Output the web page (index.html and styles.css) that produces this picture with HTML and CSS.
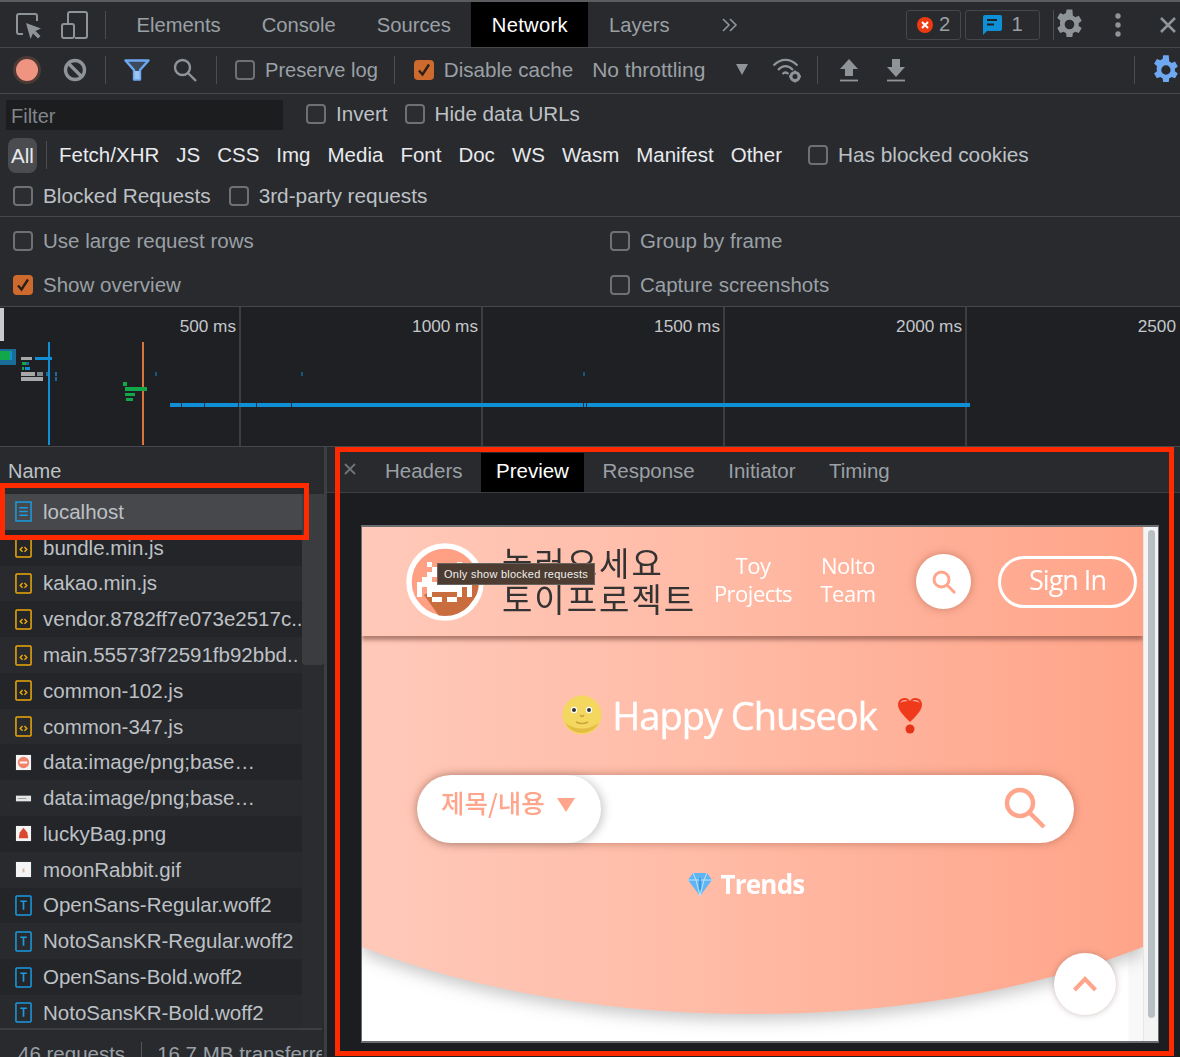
FILE: index.html
```html
<!DOCTYPE html>
<html lang="en">
<head>
    <meta charset="UTF-8">
    <meta name="viewport" content="width=device-width, initial-scale=1.0">
    <title>DevTools Network Preview</title>
    <link rel="stylesheet" href="styles.css">
</head>
<body>
    <!-- Shared file type icons -->
    <svg class="defs" width="0" height="0">
        <symbol id="ico-doc" viewBox="0 0 18 22">
            <rect x="1" y="1" width="16" height="20" fill="none" stroke="#1a9be0" stroke-width="1.6"/>
            <path d="M4.500 7h9M4.500 11h9M4.500 15h9" stroke="#1a9be0" stroke-width="1.4"/>
        </symbol>
        <symbol id="ico-js" viewBox="0 0 18 22">
            <rect x="1" y="1" width="16" height="20" rx="1" fill="none" stroke="#eba80c" stroke-width="1.6"/>
            <path d="M8 10.500l-2.500 2.500 2.500 2.500M10 10.500l2.500 2.500-2.500 2.500" fill="none" stroke="#eba80c" stroke-width="1.500"/>
        </symbol>
        <symbol id="ico-font" viewBox="0 0 18 22">
            <rect x="1" y="1" width="16" height="20" rx="1" fill="none" stroke="#1a9be0" stroke-width="1.6"/>
            <path d="M5.500 6.500h7M9 6.500v9" fill="none" stroke="#1a9be0" stroke-width="1.800"/>
        </symbol>
    </svg>

    <!-- Main tabs -->
    <div class="tabbar">
        <div class="icon-cell cell-inspect">
            <svg width="28" height="28" viewBox="0 0 28 28"><path d="M9 23H5a2 2 0 0 1-2-2V5a2 2 0 0 1 2-2h16a2 2 0 0 1 2 2v5" fill="none" stroke="#8f9499" stroke-width="2"/><path d="M12 12l15 5.500-5.500 2.500 5 5-2.500 2.500-5-5-2.500 5.500z" fill="#8f9499"/></svg>
        </div>
        <div class="icon-cell cell-device">
            <svg width="28" height="28" viewBox="0 0 28 28"><path d="M8 12V3a2 2 0 0 1 2-2h15a2 2 0 0 1 2 2v22a2 2 0 0 1-2 2H15" fill="none" stroke="#8f9499" stroke-width="2"/><rect x="2" y="13" width="12" height="14" rx="2" fill="none" stroke="#8f9499" stroke-width="2"/></svg>
        </div>
        <span class="sep sep-tab"></span>
        <div class="tab">Elements</div>
        <div class="tab">Console</div>
        <div class="tab">Sources</div>
        <div class="tab active">Network</div>
        <div class="tab">Layers</div>
        <div class="more">
            <svg width="18" height="16" viewBox="0 0 18 16"><path d="M2 2l6 6-6 6M9 2l6 6-6 6" fill="none" stroke="#8f9499" stroke-width="1.600"/></svg>
        </div>
        <div class="tabbar-right">
            <div class="badge badge-err">
                <svg width="16" height="16" viewBox="0 0 16 16"><circle cx="8" cy="8" r="8" fill="#ee3a12"/><path d="M5 5l6 6M11 5l-6 6" stroke="#fff" stroke-width="2"/></svg>
                <span>2</span>
            </div>
            <div class="badge badge-msg">
                <svg width="20" height="20" viewBox="0 0 20 20"><path d="M3 0h15a2 2 0 0 1 2 2v12a2 2 0 0 1-2 2H5l-4 4V2a2 2 0 0 1 2-2z" fill="#0f8fd6"/><path d="M5 5h10M5 9.500h7" stroke="#1f2023" stroke-width="2"/></svg>
                <span>1</span>
            </div>
            <span class="sep sep-right"></span>
            <svg class="gear-top" width="33" height="33" viewBox="0 0 24 24"><path fill="#8f9499" d="M19.400 13a7.600 7.600 0 0 0 0-2l2.200-1.700-2.100-3.600-2.600 1a7.500 7.500 0 0 0-1.700-1L14.800 1h-4.200l-.4 2.700a7.500 7.500 0 0 0-1.700 1l-2.600-1-2.100 3.600L6 9a7.600 7.600 0 0 0 0 3.900l-2.200 1.700 2.100 3.600 2.600-1c.5.400 1.100.700 1.700 1l.4 2.800h4.200l.4-2.800c.6-.3 1.200-.6 1.700-1l2.600 1 2.100-3.600zM12.700 15.500a3.500 3.500 0 1 1 0-7 3.500 3.500 0 0 1 0 7z"/></svg>
            <svg class="dots" width="6" height="24" viewBox="0 0 6 24"><circle cx="3" cy="3" r="2.700" fill="#8f9499"/><circle cx="3" cy="12" r="2.700" fill="#8f9499"/><circle cx="3" cy="21" r="2.700" fill="#8f9499"/></svg>
            <svg class="close-top" width="18" height="18" viewBox="0 0 18 18"><path d="M2 2l14 14M16 2L2 16" stroke="#8f9499" stroke-width="2.600"/></svg>
        </div>
    </div>

    <!-- Network toolbar -->
    <div class="toolbar">
        <span class="record"></span>
        <svg class="tool-stop" width="24" height="24" viewBox="0 0 24 24"><circle cx="12" cy="12" r="9.500" fill="none" stroke="#8f9499" stroke-width="3.400"/><path d="M5.500 5.500l13 13" stroke="#8f9499" stroke-width="3.400"/></svg>
        <span class="sep sep-a"></span>
        <svg class="tool-filter" width="26" height="22" viewBox="0 0 26 22"><path d="M1.500 1.500h23L16 11v9.500h-6V11z" fill="#3d4a5c" stroke="#6ea8f0" stroke-width="2.400" stroke-linejoin="round"/><path d="M10.500 12h5v8h-5z" fill="#9cc4f5"/></svg>
        <svg class="tool-search" width="24" height="24" viewBox="0 0 24 24"><circle cx="9.500" cy="9.500" r="7.500" fill="none" stroke="#8f9499" stroke-width="2.400"/><path d="M15 15l8 8" stroke="#8f9499" stroke-width="2.400"/></svg>
        <span class="sep sep-b"></span>
        <label class="check check-preserve"><span class="box"></span>Preserve log</label>
        <span class="sep sep-c"></span>
        <label class="check check-cache">
            <span class="box box-on"><svg width="20" height="20" viewBox="0 0 20 20"><path d="M5 10.500l3.500 4L15 4.500" fill="none" stroke="#2a2018" stroke-width="2.400"/></svg></span>Disable cache
        </label>
        <span class="throttle">No throttling</span>
        <span class="caret"></span>
        <svg class="tool-wifi" width="30" height="26" viewBox="0 0 30 26"><path d="M1.500 8.500C9 1 18 1 25.500 8.500M6 13c5-5 10-5 15 0M10.500 17c2-2 4-2 6 0" fill="none" stroke="#8f9499" stroke-width="2.200"/><circle cx="23" cy="19.500" r="4" fill="none" stroke="#8f9499" stroke-width="3"/><path d="M23 13.500v2M23 23.500v2M17 19.500h2M27 19.500h2" stroke="#8f9499" stroke-width="2"/></svg>
        <span class="sep sep-d"></span>
        <svg class="tool-up" width="20" height="24" viewBox="0 0 20 24"><path d="M10 1l9 10h-5v7H6v-7H1z" fill="#8f9499"/><path d="M1 22.500h18" stroke="#8f9499" stroke-width="1.800"/></svg>
        <svg class="tool-down" width="20" height="24" viewBox="0 0 20 24"><path d="M10 19l9-10h-5V1H6v8H1z" fill="#8f9499"/><path d="M1 22.500h18" stroke="#8f9499" stroke-width="1.800"/></svg>
        <span class="sep sep-e"></span>
        <svg class="tool-gear" width="32" height="32" viewBox="0 0 24 24"><path fill="#6ea8f0" d="M19.400 13a7.600 7.600 0 0 0 0-2l2.200-1.700-2.100-3.600-2.600 1a7.500 7.500 0 0 0-1.700-1L14.800 1h-4.200l-.4 2.700a7.500 7.500 0 0 0-1.700 1l-2.600-1-2.100 3.600L6 9a7.600 7.600 0 0 0 0 3.900l-2.200 1.700 2.100 3.600 2.600-1c.5.400 1.100.700 1.700 1l.4 2.800h4.200l.4-2.800c.6-.3 1.200-.6 1.700-1l2.600 1 2.100-3.600zM12.700 15.500a3.500 3.500 0 1 1 0-7 3.500 3.500 0 0 1 0 7z"/></svg>
    </div>

    <!-- Filter rows -->
    <div class="filters">
        <div class="filter-row">
            <div class="filter-input">Filter</div>
            <label class="check check-invert"><span class="box"></span>Invert</label>
            <label class="check check-hide"><span class="box"></span>Hide data URLs</label>
        </div>
        <div class="type-row">
            <span class="type type-all">All</span>
            <span class="sep sep-all"></span>
            <span class="type">Fetch/XHR</span>
            <span class="type">JS</span>
            <span class="type">CSS</span>
            <span class="type">Img</span>
            <span class="type">Media</span>
            <span class="type">Font</span>
            <span class="type">Doc</span>
            <span class="type">WS</span>
            <span class="type">Wasm</span>
            <span class="type">Manifest</span>
            <span class="type">Other</span>
            <label class="check check-cookies"><span class="box"></span>Has blocked cookies</label>
        </div>
        <div class="blocked-row">
            <label class="check"><span class="box"></span>Blocked Requests</label>
            <label class="check"><span class="box"></span>3rd-party requests</label>
        </div>
    </div>

    <!-- Settings -->
    <div class="settings">
        <label class="check"><span class="box"></span>Use large request rows</label>
        <label class="check"><span class="box"></span>Group by frame</label>
        <label class="check">
            <span class="box box-on"><svg width="20" height="20" viewBox="0 0 20 20"><path d="M5 10.500l3.500 4L15 4.500" fill="none" stroke="#2a2018" stroke-width="2.400"/></svg></span>Show overview
        </label>
        <label class="check"><span class="box"></span>Capture screenshots</label>
    </div>

    <!-- Timeline overview -->
    <div class="overview">
        <div class="tick">500 ms</div>
        <div class="tick">1000 ms</div>
        <div class="tick">1500 ms</div>
        <div class="tick">2000 ms</div>
        <div class="tick tick-last">2500</div>
        <svg class="waterfall" width="1180" height="139" viewBox="0 307 1180 139">
            <rect x="0" y="308" width="4" height="33" fill="#c9cacc"/>
            <rect x="0" y="349" width="16" height="16" fill="#1a6d99"/>
            <rect x="0" y="351" width="10" height="9" fill="#12a84a"/>
            <rect x="10" y="351" width="2" height="9" fill="#0f8fd6"/>
            <rect x="21" y="357" width="11" height="3" fill="#a8a8a8"/>
            <rect x="35" y="357" width="17" height="3" fill="#0f8fd6"/>
            <rect x="22" y="362" width="4" height="3" fill="#12a84a"/>
            <rect x="26" y="362" width="3" height="3" fill="#1a6d99"/>
            <rect x="22" y="367" width="2" height="3" fill="#12a84a"/>
            <rect x="25" y="367" width="5" height="3" fill="#0f8fd6"/>
            <rect x="21" y="372" width="14" height="4" fill="#a8a8a8"/>
            <rect x="37" y="372" width="6" height="4" fill="#7f8a90"/>
            <rect x="46" y="372" width="4" height="4" fill="#1a6d99"/>
            <rect x="55" y="372" width="2" height="4" fill="#1a6d99"/>
            <rect x="21" y="377" width="22" height="4" fill="#a8a8a8"/>
            <rect x="55" y="377" width="2" height="4" fill="#1a6d99"/>
            <rect x="48" y="342" width="2" height="103" fill="#0f8fd6"/>
            <rect x="142" y="342" width="2" height="103" fill="#d9743a"/>
            <rect x="123" y="382" width="4" height="4" fill="#12a84a"/>
            <rect x="125" y="387" width="22" height="4" fill="#12a84a"/>
            <rect x="125" y="393" width="10" height="3" fill="#12a84a"/>
            <rect x="126" y="398" width="7" height="3" fill="#12a84a"/>
            <rect x="155" y="372" width="2" height="4" fill="#16567a"/>
            <rect x="301" y="372" width="2" height="4" fill="#16567a"/>
            <rect x="583" y="372" width="2" height="4" fill="#16567a"/>
            <rect x="170" y="403" width="800" height="4" fill="#0f8fd6"/>
            <path d="M181.500 403v4M204.500 403v4M238.500 403v4M256.500 403v4M291.500 403v4M583.500 403v4M586.500 403v4" stroke="#23303a"/>
        </svg>
    </div>

    <div class="bottom">
        <!-- Request list -->
        <div class="requests">
            <div class="name-head">Name</div>
            <div class="list-wrap">
                <div class="rows">
                    <div class="row selected"><svg class="ftype"><use href="#ico-doc"/></svg><span class="row-name">localhost</span></div>
                    <div class="row"><svg class="ftype"><use href="#ico-js"/></svg><span class="row-name">bundle.min.js</span></div>
                    <div class="row"><svg class="ftype"><use href="#ico-js"/></svg><span class="row-name">kakao.min.js</span></div>
                    <div class="row"><svg class="ftype"><use href="#ico-js"/></svg><span class="row-name">vendor.8782ff7e073e2517c..</span></div>
                    <div class="row"><svg class="ftype"><use href="#ico-js"/></svg><span class="row-name">main.55573f72591fb92bbd..</span></div>
                    <div class="row"><svg class="ftype"><use href="#ico-js"/></svg><span class="row-name">common-102.js</span></div>
                    <div class="row"><svg class="ftype"><use href="#ico-js"/></svg><span class="row-name">common-347.js</span></div>
                    <div class="row">
                        <svg class="ftype" viewBox="0 0 18 22"><rect x="1" y="3" width="16" height="16" fill="#f4f4f4"/><circle cx="9" cy="11" r="6" fill="#f0836a"/><path d="M5 11h8" stroke="#fff" stroke-width="2"/></svg>
                        <span class="row-name">data:image/png;base…</span>
                    </div>
                    <div class="row">
                        <svg class="ftype" viewBox="0 0 18 22"><rect x="1" y="8" width="16" height="6" fill="#e6e6e6"/><path d="M3 11h9" stroke="#999"/></svg>
                        <span class="row-name">data:image/png;base…</span>
                    </div>
                    <div class="row">
                        <svg class="ftype" viewBox="0 0 18 22"><rect x="1" y="3" width="16" height="16" fill="#f4f4f4"/><path d="M9 5l4 5 1 6H4l1-6z" fill="#d9492e"/></svg>
                        <span class="row-name">luckyBag.png</span>
                    </div>
                    <div class="row">
                        <svg class="ftype" viewBox="0 0 18 22"><rect x="1" y="3" width="16" height="16" fill="#f4f4f4"/><path d="M8 10h2v4H8z" fill="#e2b0a5"/></svg>
                        <span class="row-name">moonRabbit.gif</span>
                    </div>
                    <div class="row"><svg class="ftype"><use href="#ico-font"/></svg><span class="row-name">OpenSans-Regular.woff2</span></div>
                    <div class="row"><svg class="ftype"><use href="#ico-font"/></svg><span class="row-name">NotoSansKR-Regular.woff2</span></div>
                    <div class="row"><svg class="ftype"><use href="#ico-font"/></svg><span class="row-name">OpenSans-Bold.woff2</span></div>
                    <div class="row"><svg class="ftype"><use href="#ico-font"/></svg><span class="row-name">NotoSansKR-Bold.woff2</span></div>
                </div>
                <div class="list-scroll"><div class="list-thumb"></div></div>
            </div>
            <div class="status">
                <span class="status-count">46 requests</span>
                <span class="status-size">16.7 MB transferred</span>
            </div>
        </div>

        <!-- Response preview -->
        <div class="detail">
            <div class="detail-tabs">
                <svg class="detail-close" width="12" height="12" viewBox="0 0 12 12"><path d="M1 1l10 10M11 1L1 11" stroke="#6f7377" stroke-width="1.800"/></svg>
                <div class="dtab">Headers</div>
                <div class="dtab dtab-active">Preview</div>
                <div class="dtab">Response</div>
                <div class="dtab">Initiator</div>
                <div class="dtab">Timing</div>
            </div>
            <div class="preview-area">
                <div class="frame">
                    <div class="page">
                        <div class="hero-shadow">
                            <div class="hero">
                                <div class="site-head">
                                    <svg class="logo" width="78" height="78" viewBox="0 0 78 78">
                                        <defs><clipPath id="logo-clip"><circle cx="39" cy="39" r="34"/></clipPath></defs>
                                        <circle cx="39" cy="39" r="36" fill="#ff9f84" stroke="#fff" stroke-width="5.500"/>
                                        <path clip-path="url(#logo-clip)" d="M18 52L62 28 80 40 50 80 38 80z" fill="#c96c3e"/>
                                        <path transform="translate(11 19) scale(5)" fill="#fff" d="M2 0h1v1h-1zM8 0h1v1h-1zM3 1h1v1h-1zM7 1h1v1h-1zM2 2h7v1h-7zM1 3h2v1h-2zM4 3h3v1h-3zM8 3h2v1h-2zM0 4h11v1h-11zM0 5h1v1h-1zM2 5h7v1h-7zM10 5h1v1h-1zM0 6h1v1h-1zM2 6h1v1h-1zM8 6h1v1h-1zM10 6h1v1h-1zM3 7h2v1h-2zM6 7h2v1h-2z"/>
                                    </svg>
                                    <div class="site-title">놀러오세요<br>토이프로젝트</div>
                                    <div class="site-nav nav-toy">Toy<br>Projects</div>
                                    <div class="site-nav nav-team">Nolto<br>Team</div>
                                    <div class="round-search">
                                        <svg width="26" height="26" viewBox="0 0 26 26"><circle cx="10.500" cy="10.500" r="7.500" fill="none" stroke="#ffa58c" stroke-width="3"/><path d="M16 16l8 8" stroke="#ffa58c" stroke-width="3"/></svg>
                                    </div>
                                    <div class="sign-in">Sign In</div>
                                </div>
                                <div class="hero-main">
                                    <div class="greeting">
                                        <svg class="moon" width="40" height="40" viewBox="0 0 40 40">
                                            <circle cx="20" cy="20" r="19.500" fill="#f4d75f"/>
                                            <path d="M3 28a19.500 19.500 0 0 0 34 0q-17 11-34 0z" fill="#e5bd45"/>
                                            <circle cx="12" cy="15" r="3.200" fill="#fff"/><circle cx="12" cy="15" r="2" fill="#333"/>
                                            <circle cx="27" cy="15" r="3.200" fill="#fff"/><circle cx="27" cy="15" r="2" fill="#333"/>
                                            <path d="M18 20q2 3 4 0M14 27q6 3 12 0" fill="none" stroke="#cfa63c" stroke-width="1.600"/>
                                        </svg>
                                        <span class="greeting-text">Happy Chuseok</span>
                                        <svg class="heart" width="26" height="38" viewBox="0 0 26 38">
                                            <path d="M13 26C5 18 1 14 1 8a6.500 6.500 0 0 1 12-3 6.500 6.500 0 0 1 12 3c0 6-4 10-12 18z" fill="#ef3a1c"/>
                                            <path d="M3 7q3-5 8-2-5 0-8 2zM15 5q5-3 8 2-3-2-8-2z" fill="#f7b7a8"/>
                                            <circle cx="13" cy="33" r="4.500" fill="#e5341a"/>
                                        </svg>
                                    </div>
                                    <div class="search-bar">
                                        <div class="search-select">
                                            <span class="select-label">제목/내용</span>
                                            <span class="select-caret"></span>
                                        </div>
                                        <svg class="search-glass" width="42" height="42" viewBox="0 0 42 42"><circle cx="16" cy="16" r="13" fill="none" stroke="#ffa58c" stroke-width="4.500"/><path d="M25 25l15 15" stroke="#ffa58c" stroke-width="4.500"/></svg>
                                    </div>
                                    <div class="trends">
                                        <svg width="26" height="24" viewBox="0 0 26 24"><path d="M6 1h14l5 7-12 16L1 8z" fill="#5fb4f2"/><path d="M6 1l3 7 4 16 4-16 3-7M1 8h24" fill="none" stroke="#bfe3fb" stroke-width="1"/><path d="M13 6v12" stroke="#2787d0" stroke-width="1.200"/></svg>
                                        <span>Trends</span>
                                    </div>
                                </div>
                            </div>
                        </div>
                        <div class="top-btn">
                            <svg width="26" height="16" viewBox="0 0 26 16"><path d="M2.500 14L13 3l10.500 11" fill="none" stroke="#ffa58c" stroke-width="4"/></svg>
                        </div>
                    </div>
                    <div class="page-scroll"><div class="page-thumb"></div></div>
                </div>
                <div class="tooltip">Only show blocked requests</div>
            </div>
        </div>
    </div>

    <!-- Red annotation boxes -->
    <div class="mark mark-row"></div>
    <div class="mark mark-panel"></div>
</body>
</html>
```

FILE: styles.css
```css
/* Page */
body {
    margin: 0;
    width: 1180px;
    height: 1057px;
    overflow: hidden;
    position: relative;
    background-color: #292a2d;
    color: #9aa0a6;
    font-family: "Liberation Sans", Arial, sans-serif;
    font-size: 20.500px;
}

.defs {
    position: absolute;
}

svg {
    display: block;
    flex: none;
}

.sep {
    width: 1px;
    height: 28px;
    background-color: #4b4d50;
    flex: none;
}

/* Checkboxes */
.check {
    display: flex;
    align-items: center;
    gap: 10px;
    white-space: nowrap;
}

.box {
    width: 16px;
    height: 16px;
    border: 2px solid #6e7074;
    border-radius: 4px;
    background-color: #2c2d30;
    flex: none;
    position: relative;
}

.box-on {
    background-color: #cf6a2e;
    border-color: #cf6a2e;
}

.box-on svg {
    margin: -2px;
}

/* Main tabs */
.tabbar {
    height: 45px;
    border-top: 2px solid #5b5c5f;
    border-bottom: 1px solid #46474a;
    display: flex;
    align-items: center;
    font-size: 20.200px;
}

.cell-inspect {
    margin-left: 14px;
}

.cell-device {
    margin-left: 18px;
}

.sep-tab {
    margin-left: 17px;
    margin-right: 10px;
}

.tab {
    height: 45px;
    line-height: 47px;
    padding: 0 20.500px;
    flex: none;
}

.tab.active {
    background-color: #000;
    color: #fff;
    letter-spacing: 0.300px;
}

.more {
    margin-left: 31px;
}

.tabbar-right {
    display: flex;
    align-items: center;
    position: absolute;
    right: 0;
    top: 2px;
    height: 45px;
}

.badge {
    height: 30px;
    border: 1px solid #46474a;
    border-radius: 3px;
    display: flex;
    align-items: center;
    justify-content: center;
    gap: 6px;
    box-sizing: border-box;
}

.badge-err {
    width: 55px;
    margin-right: 4px;
}

.badge-msg {
    width: 75px;
    gap: 9px;
}

.sep-right {
    height: 30px;
    margin-left: 13px;
}

.gear-top {
    margin-left: -2px;
}

.dots {
    margin-left: 30px;
}

.close-top {
    margin: 0 3px 0 38px;
}

/* Network toolbar */
.toolbar {
    height: 46px;
    box-sizing: border-box;
    padding-bottom: 1px;
    border-bottom: 1px solid #46474a;
    display: flex;
    align-items: center;
    font-size: 20.100px;
}

.record {
    width: 22px;
    height: 22px;
    border-radius: 50%;
    background-color: #ee9480;
    box-shadow: 0 0 0 3px #4d3a36;
    margin-left: 16px;
    flex: none;
}

.tool-stop {
    margin-left: 25px;
}

.sep-a {
    margin-left: 18px;
}

.tool-filter {
    margin-left: 18px;
}

.tool-search {
    margin-left: 23px;
}

.sep-b {
    margin-left: 19px;
}

.check-preserve {
    margin-left: 18px;
}

.sep-c {
    margin-left: 16px;
}

.check-cache {
    margin-left: 19px;
    font-size: 20.600px;
}

.throttle {
    margin-left: 19px;
    font-size: 21px;
    white-space: nowrap;
}

.caret {
    width: 0;
    height: 0;
    border-left: 6px solid transparent;
    border-right: 6px solid transparent;
    border-top: 11px solid #8f9499;
    margin-left: 31px;
    margin-top: -2px;
}

.tool-wifi {
    margin-left: 24px;
}

.sep-d {
    margin-left: 15px;
}

.tool-up {
    margin-left: 21px;
}

.tool-down {
    margin-left: 27px;
}

.sep-e {
    margin-left: 228px;
}

.tool-gear {
    margin-left: 14px;
}

/* Filter rows */
.filters {
    height: 122px;
    border-bottom: 1px solid #46474a;
    color: #bdc1c6;
    font-size: 20.600px;
}

.filter-row {
    height: 42px;
    display: flex;
    align-items: center;
}

.filter-input {
    width: 272px;
    height: 30px;
    line-height: 32px;
    margin: -1px 0 0 6px;
    padding-left: 5px;
    background-color: #1c1d1f;
    color: #80868b;
    font-size: 20px;
    flex: none;
}

.check-invert {
    margin-left: 23px;
    margin-top: -2px;
}

.check-hide {
    margin-left: 17px;
    margin-top: -2px;
}

.type-row {
    height: 39px;
    box-sizing: border-box;
    padding-bottom: 1px;
    display: flex;
    align-items: center;
    gap: 17px;
    color: #e8eaed;
    font-size: 20.500px;
}

.type {
    flex: none;
}

.type-all {
    margin-left: 8px;
    width: 29px;
    height: 35px;
    line-height: 35px;
    text-align: center;
    background-color: #4a4c50;
    border-radius: 8px;
}

.sep-all {
    margin: 0 -5px 0 -8px;
}

.check-cookies {
    margin-left: 9px;
    color: #bdc1c6;
    font-size: 20.800px;
}

.blocked-row {
    height: 41px;
    display: flex;
    align-items: center;
    gap: 18px;
    padding-left: 13px;
    font-size: 20.800px;
}

/* Settings */
.settings {
    height: 90px;
    border-bottom: 1px solid #46474a;
    display: grid;
    grid-template-columns: 597px 1fr;
    grid-auto-rows: 44px;
    padding: 2px 0 0 13px;
    box-sizing: border-box;
    align-items: center;
    font-size: 20.500px;
}

/* Timeline overview */
.overview {
    height: 140px;
    display: grid;
    grid-template-columns: 241px repeat(3, 242px) 1fr;
    position: relative;
    background-color: #1f2023;
    border-bottom: 1px solid #46474a;
    box-sizing: border-box;
    color: #c4c7cb;
    font-size: 17.200px;
}

.tick {
    border-right: 2px solid #3c3d40;
    text-align: right;
    padding: 9px 3px 0 0;
}

.tick-last {
    border-right: none;
    padding-right: 4px;
}

.waterfall {
    position: absolute;
    left: 0;
    top: 0;
}

/* Request list and preview */
.bottom {
    display: flex;
    height: 610px;
}

.requests {
    width: 324px;
    height: 610px;
    border-right: 3px solid #3d3e41;
    flex: none;
    overflow: hidden;
}

.name-head {
    height: 47px;
    line-height: 49px;
    padding-left: 8px;
    font-size: 20px;
    color: #bdc1c6;
}

.list-wrap {
    display: flex;
    height: 534px;
    overflow: hidden;
}

.rows {
    width: 302px;
    flex: none;
}

.row {
    height: 35.790px;
    display: flex;
    align-items: center;
    padding-left: 15px;
    gap: 11px;
    box-sizing: border-box;
    color: #bdc1c6;
    white-space: nowrap;
}

.row:nth-child(even) {
    background-color: #242528;
}

.row.selected {
    background-color: #47484b;
}

.ftype {
    width: 17px;
    height: 21px;
}

.list-scroll {
    width: 22px;
    background-color: #2b2c2f;
}

.list-thumb {
    height: 171px;
    background-color: #3b3c3f;
    border-radius: 0 0 3px 3px;
}

.status {
    width: 322px;
    height: 30px;
    border-top: 2px solid #3d3e41;
    display: flex;
    align-items: flex-start;
    white-space: nowrap;
    overflow: hidden;
    padding-top: 12px;
}

.status-count {
    padding: 0 16px 0 18px;
    border-right: 1px solid #55565a;
}

.status-size {
    padding-left: 15px;
}

.detail {
    flex: 1;
    display: flex;
    flex-direction: column;
    position: relative;
}

.detail-tabs {
    height: 45px;
    border-bottom: 1px solid #3d3e41;
    display: flex;
    align-items: flex-end;
    font-size: 20.500px;
    padding-left: 43px;
    position: relative;
}

.detail-close {
    position: absolute;
    left: 17px;
    top: 16px;
}

.dtab {
    height: 39px;
    line-height: 35px;
    padding: 0 15px;
    margin-right: 3.500px;
}

.dtab-active {
    background-color: #000;
    color: #fff;
}

.preview-area {
    flex: 1;
    background-color: #1c1d20;
    padding: 32px 21px 0 34px;
    position: relative;
}

.frame {
    width: 798px;
    height: 518px;
    border-style: solid;
    border-color: #6b6c70;
    border-width: 2px 1px;
    box-sizing: border-box;
    display: flex;
    background-color: #fff;
}

.page {
    width: 781px;
    position: relative;
    overflow: hidden;
    background: linear-gradient(to right, #fff 0, #fff 766px, #f8f8f8 767px);
}

.page-scroll {
    flex: 1;
    background-color: #f4f4f4;
    padding: 3px 3px 0 4px;
    border-left: 1px solid #e6e6e6;
}

.page-thumb {
    height: 488px;
    border-radius: 4px;
    background-color: #b9c0c4;
}

/* Previewed site */
.hero-shadow {
    filter: drop-shadow(0 6px 8px rgba(70, 70, 70, 0.3));
}

.hero {
    height: 490px;
    background: linear-gradient(to right, #ffc9b9, #ffbba6 45%, #ffa489);
    clip-path: ellipse(600px 279px at 50% 208px);
}

.site-head {
    height: 109px;
    display: flex;
    align-items: center;
    padding-left: 44px;
    box-shadow: 0 4px 4px rgba(110, 60, 50, 0.55);
    color: #fff;
}

.site-title {
    width: 194px;
    margin-left: 18px;
    color: #333;
    font-family: "Noto Sans CJK KR", sans-serif;
    font-size: 33px;
    letter-spacing: 2px;
    line-height: 36px;
    white-space: nowrap;
    flex: none;
    padding-bottom: 3px;
}

.site-nav {
    font-family: "Open Sans", sans-serif;
    font-size: 22px;
    line-height: 28px;
    text-align: center;
    letter-spacing: -0.500px;
    flex: none;
    width: 80px;
    margin-top: -6px;
}

.nav-toy {
    margin-left: 17px;
}

.nav-team {
    margin-left: 15px;
}

.round-search {
    width: 55px;
    height: 55px;
    margin-left: 28px;
    border-radius: 50%;
    background-color: #fff;
    box-shadow: 0 0 8px rgba(150, 80, 60, 0.5);
    display: flex;
    align-items: center;
    justify-content: center;
    flex: none;
}

.sign-in {
    width: 139px;
    height: 52px;
    margin-left: 27px;
    border: 3px solid #fff;
    border-radius: 26px;
    box-sizing: border-box;
    text-align: center;
    line-height: 42px;
    font-family: "Open Sans", sans-serif;
    font-size: 27px;
    letter-spacing: -1px;
    flex: none;
}

.hero-main {
    padding: 0 69px 0 55px;
    color: #fff;
    font-family: "Open Sans", sans-serif;
}

.greeting {
    display: flex;
    align-items: center;
    justify-content: center;
    margin-top: 59px;
    height: 40px;
    padding-right: 6px;
}

.greeting-text {
    margin: 0 20px 0 10px;
    font-size: 38px;
    font-weight: 500;
    letter-spacing: -1px;
    white-space: nowrap;
    -webkit-text-stroke: 0.4px #fff;
}

.search-bar {
    height: 68px;
    margin-top: 40px;
    border-radius: 34px;
    background-color: #fff;
    box-shadow: 0 0 10px rgba(150, 80, 60, 0.55);
    display: flex;
    align-items: center;
    justify-content: space-between;
}

.search-select {
    width: 184px;
    height: 68px;
    border-radius: 34px;
    box-shadow: 3px 1px 8px rgba(90, 90, 90, 0.3);
    display: flex;
    align-items: center;
    padding-left: 24px;
    box-sizing: border-box;
    color: #ffa58c;
    font-family: "Noto Sans CJK KR", sans-serif;
    font-size: 25.500px;
    font-weight: 500;
}

.select-label {
    margin-top: -16px;
    white-space: nowrap;
}

.select-caret {
    width: 0;
    height: 0;
    border-left: 9px solid transparent;
    border-right: 9px solid transparent;
    border-top: 14px solid #ffa58c;
    margin: -8px 0 0 12px;
}

.search-glass {
    margin-right: 28px;
    margin-top: -2px;
}

.trends {
    display: flex;
    align-items: center;
    justify-content: center;
    gap: 8px;
    margin-top: 26px;
    font-size: 26px;
    font-weight: 700;
    letter-spacing: -0.800px;
    height: 30px;
}

.top-btn {
    position: absolute;
    left: 692px;
    top: 426px;
    width: 62px;
    height: 62px;
    border-radius: 50%;
    background-color: #fff;
    box-shadow: 0 0 6px rgba(120, 90, 80, 0.4);
    display: flex;
    align-items: center;
    justify-content: center;
}

/* Items on top of the page */
.tooltip {
    position: absolute;
    left: 110px;
    top: 70px;
    height: 20px;
    padding: 0 6px;
    line-height: 20px;
    background-color: #4d3c31;
    border: 1px solid #6a6460;
    color: #efefef;
    font-size: 11px;
    letter-spacing: 0.250px;
    white-space: nowrap;
}

.mark {
    position: absolute;
    border: 5px solid #ff2a00;
    box-sizing: border-box;
}

.mark-row {
    left: 0;
    top: 483px;
    width: 309px;
    height: 57px;
}

.mark-panel {
    left: 335px;
    top: 447px;
    width: 839px;
    height: 609px;
}
```
